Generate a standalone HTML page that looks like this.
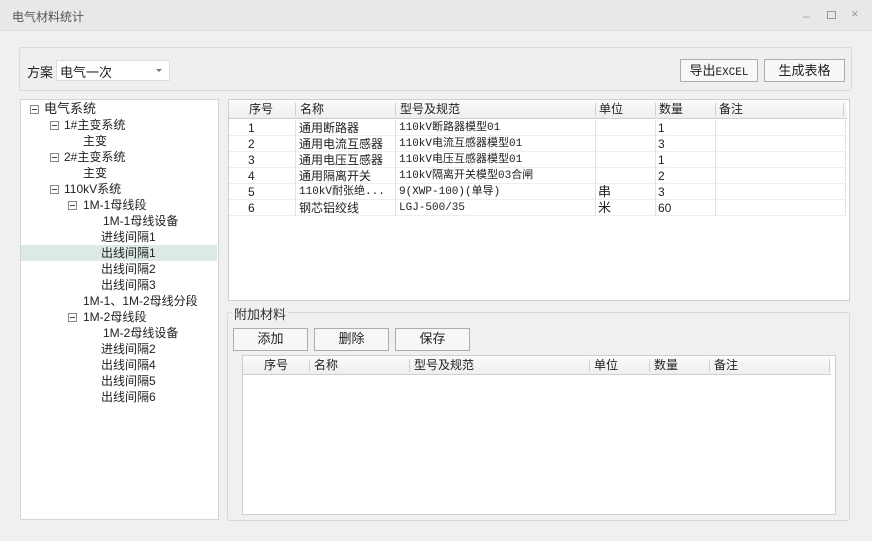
<!DOCTYPE html>
<html><head><meta charset="utf-8"><style>
*{margin:0;padding:0;box-sizing:border-box}
body{width:872px;height:541px;background:#f0f0f0;font-family:"Liberation Sans","Noto Sans CJK SC",sans-serif;font-size:12px;color:#222;position:relative;overflow:hidden}
.a{position:absolute;white-space:nowrap}
.title{left:0;top:0;width:872px;height:31px;background:#e8e8e8;border-bottom:1px solid #dcdcdc}
.btn{position:absolute;background:#f7f7f7;border:1px solid #adadad;text-align:center;font-size:12px;line-height:20px}
.row{position:absolute;left:0;height:16px;line-height:16px;width:100%}
.tw{position:absolute;left:20px;top:99px;width:199px;height:421px;background:#fff;border:1px solid #d5d5d5}
.tr{position:absolute;height:16px;line-height:16px;font-size:12px}
.bx{position:absolute;width:9px;height:9px;border:1px solid #888;top:4px}
.bx:after{content:"";position:absolute;left:1px;top:3px;width:5px;height:1px;background:#444}
.hd{position:absolute;height:19px;line-height:19px;background:linear-gradient(#fbfbfb,#eeeeee);border-bottom:1px solid #cfcfcf}
.sep{position:absolute;top:3px;width:1px;height:13px;background:#d0d0d0}
.m{font-family:'Liberation Mono','Noto Sans CJK SC',monospace;font-size:11px}
</style></head><body>
<div class="a title"></div>
<div class="a" style="left:12px;top:8px;color:#555;font-size:12px">电气材料统计</div>
<div class="a" style="left:803px;top:9px;color:#999">–</div>
<div class="a" style="left:827px;top:11px;width:9px;height:8px;border:1px solid #999"></div>
<div class="a" style="left:851px;top:6px;color:#999;font-size:13px">×</div>

<div class="a" style="left:19px;top:47px;width:833px;height:44px;border:1px solid #dadada;border-radius:3px;background:#efefef"></div>
<div class="a" style="left:27px;top:62px;font-size:13px">方案</div>
<div class="a" style="left:56px;top:60px;width:114px;height:21px;background:#fff;border:1px solid #ddd"></div>
<div class="a" style="left:60px;top:62px;font-size:13px">电气一次</div>
<div class="a" style="left:156px;top:69px;border-left:3px solid transparent;border-right:3px solid transparent;border-top:3px solid #777"></div>
<div class="btn" style="left:680px;top:59px;width:78px;height:23px;line-height:21px;font-size:13px">导出<span class="m">EXCEL</span></div>
<div class="btn" style="left:764px;top:59px;width:81px;height:23px;line-height:21px;font-size:13px">生成表格</div>

<div class="tw"></div>
<div class="a" style="left:21px;top:245px;width:196px;height:16px;background:#dde9e4"></div>
<div class="a" style="left:0;top:101px;width:220px;height:330px">
<div class="tr" style="top:0;left:30px"><span class="bx" style="left:0"></span><span style="position:absolute;left:14px;font-size:13px">电气系统</span></div>
<div class="tr" style="top:16px;left:50px"><span class="bx" style="left:0"></span><span style="position:absolute;left:14px">1#主变系统</span></div>
<div class="tr" style="top:32px;left:83px">主变</div>
<div class="tr" style="top:48px;left:50px"><span class="bx" style="left:0"></span><span style="position:absolute;left:14px">2#主变系统</span></div>
<div class="tr" style="top:64px;left:83px">主变</div>
<div class="tr" style="top:80px;left:50px"><span class="bx" style="left:0"></span><span style="position:absolute;left:14px">110kV系统</span></div>
<div class="tr" style="top:96px;left:68px"><span class="bx" style="left:0"></span><span style="position:absolute;left:15px">1M-1母线段</span></div>
<div class="tr" style="top:112px;left:103px">1M-1母线设备</div>
<div class="tr" style="top:128px;left:101px">进线间隔1</div>
<div class="tr" style="top:144px;left:101px">出线间隔1</div>
<div class="tr" style="top:160px;left:101px">出线间隔2</div>
<div class="tr" style="top:176px;left:101px">出线间隔3</div>
<div class="tr" style="top:192px;left:83px">1M-1、1M-2母线分段</div>
<div class="tr" style="top:208px;left:68px"><span class="bx" style="left:0"></span><span style="position:absolute;left:15px">1M-2母线段</span></div>
<div class="tr" style="top:224px;left:103px">1M-2母线设备</div>
<div class="tr" style="top:240px;left:101px">进线间隔2</div>
<div class="tr" style="top:256px;left:101px">出线间隔4</div>
<div class="tr" style="top:272px;left:101px">出线间隔5</div>
<div class="tr" style="top:288px;left:101px">出线间隔6</div>
</div>

<div class="a" style="left:228px;top:99px;width:622px;height:202px;background:#fff;border:1px solid #d0d0d0"></div>
<div class="hd" style="left:229px;top:100px;width:618px;font-size:12px">
<span class="a" style="left:20px">序号</span><span class="sep" style="left:66px"></span>
<span class="a" style="left:71px">名称</span><span class="sep" style="left:166px"></span>
<span class="a" style="left:171px">型号及规范</span><span class="sep" style="left:366px"></span>
<span class="a" style="left:370px">单位</span><span class="sep" style="left:426px"></span>
<span class="a" style="left:430px">数量</span><span class="sep" style="left:486px"></span>
<span class="a" style="left:490px">备注</span><span class="sep" style="left:614px"></span>
</div>
<div class="a" style="left:229px;top:120px;width:617px;height:96px;font-size:12px">
<div class="row" style="top:0;border-bottom:1px solid #eee"><span class="a" style="left:19px">1</span><span class="a" style="left:70px">通用断路器</span><span class="a m" style="left:170px">110kV断路器模型01</span><span class="a" style="left:429px">1</span></div>
<div class="row" style="top:16px;border-bottom:1px solid #eee"><span class="a" style="left:19px">2</span><span class="a" style="left:70px">通用电流互感器</span><span class="a m" style="left:170px">110kV电流互感器模型01</span><span class="a" style="left:429px">3</span></div>
<div class="row" style="top:32px;border-bottom:1px solid #eee"><span class="a" style="left:19px">3</span><span class="a" style="left:70px">通用电压互感器</span><span class="a m" style="left:170px">110kV电压互感器模型01</span><span class="a" style="left:429px">1</span></div>
<div class="row" style="top:48px;border-bottom:1px solid #eee"><span class="a" style="left:19px">4</span><span class="a" style="left:70px">通用隔离开关</span><span class="a m" style="left:170px">110kV隔离开关模型03合闸</span><span class="a" style="left:429px">2</span></div>
<div class="row" style="top:64px;border-bottom:1px solid #eee"><span class="a" style="left:19px">5</span><span class="a m" style="left:70px">110kV耐张绝...</span><span class="a m" style="left:170px">9(XWP-100)(单导)</span><span class="a" style="left:369px;font-size:13px">串</span><span class="a" style="left:429px">3</span></div>
<div class="row" style="top:80px;border-bottom:1px solid #eee"><span class="a" style="left:19px">6</span><span class="a" style="left:70px">钢芯铝绞线</span><span class="a m" style="left:170px">LGJ-500/35</span><span class="a" style="left:369px;font-size:13px">米</span><span class="a" style="left:429px">60</span></div>
<span class="a" style="left:66px;top:0;width:1px;height:96px;background:#e3e3e3"></span>
<span class="a" style="left:166px;top:0;width:1px;height:96px;background:#e3e3e3"></span>
<span class="a" style="left:366px;top:0;width:1px;height:96px;background:#e3e3e3"></span>
<span class="a" style="left:426px;top:0;width:1px;height:96px;background:#e3e3e3"></span>
<span class="a" style="left:486px;top:0;width:1px;height:96px;background:#e3e3e3"></span>
<span class="a" style="left:616px;top:0;width:1px;height:96px;background:#e3e3e3"></span>
</div>

<div class="a" style="left:227px;top:312px;width:623px;height:209px;border:1px solid #d8d8d8;border-radius:3px"></div>
<div class="a" style="left:232px;top:304px;background:#f0f0f0;padding:0 2px;font-size:13px;color:#333">附加材料</div>
<div class="btn" style="left:233px;top:328px;width:75px;height:23px;font-size:13px">添加</div>
<div class="btn" style="left:314px;top:328px;width:75px;height:23px;font-size:13px">删除</div>
<div class="btn" style="left:395px;top:328px;width:75px;height:23px;font-size:13px">保存</div>
<div class="a" style="left:242px;top:355px;width:594px;height:160px;background:#fff;border:1px solid #cfcfcf"></div>
<div class="hd" style="left:243px;top:356px;width:588px;font-size:12px">
<span class="a" style="left:21px">序号</span><span class="sep" style="left:66px"></span>
<span class="a" style="left:71px">名称</span><span class="sep" style="left:166px"></span>
<span class="a" style="left:171px">型号及规范</span><span class="sep" style="left:346px"></span>
<span class="a" style="left:351px">单位</span><span class="sep" style="left:406px"></span>
<span class="a" style="left:411px">数量</span><span class="sep" style="left:466px"></span>
<span class="a" style="left:471px">备注</span><span class="sep" style="left:586px"></span>
</div>
</body></html>
